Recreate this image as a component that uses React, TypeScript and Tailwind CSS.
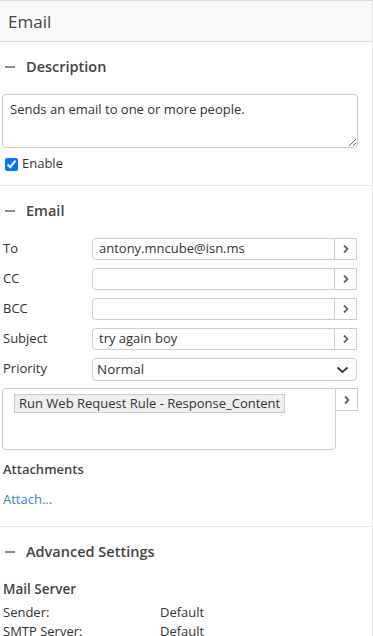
import React from 'react';

const font = { fontFamily: '"Open Sans", "Noto Sans", sans-serif' };

function Chevron() {
  return (
    <svg width="8" height="10" viewBox="0 0 8 10" className="text-[#666]">
      <path d="M2 1.5 L5.5 5 L2 8.5" fill="none" stroke="currentColor" strokeWidth="1.8" />
    </svg>
  );
}

function SectionTitle({ title }: { title: string }) {
  return (
    <div className="flex h-[52px] items-center pb-[2px] pl-[5px]">
      <span className="block h-[2px] w-[10px] bg-[#888]" />
      <span className="ml-[11px] text-[14.5px] font-semibold text-[#444]">{title}</span>
    </div>
  );
}

// one label + input + picker button row
function FieldRow({ label, value }: { label: string; value?: string }) {
  return (
    <div className="flex h-[30px] items-start">
      <div className="w-[90px] pl-[1px] pt-[1px] text-[13px] text-[#333]">{label}</div>
      <div className="flex h-[22px] w-[265px]">
        <div className="flex flex-1 items-center rounded-l-[4px] border border-[#ccc] px-[6px] text-[13px] text-[#333]">
          {value}
        </div>
        <button className="flex w-[22px] items-center justify-center border border-l-0 border-[#ccc] bg-white">
          <Chevron />
        </button>
      </div>
    </div>
  );
}

export default function App() {
  return (
    <div className="min-h-[636px] w-[373px] border-r border-[#e3e3e3] bg-white" style={font}>
      <div className="flex h-[42px] items-center border-y border-[#ddd] bg-[#f9f9f9] pl-[8px] pt-[2px]">
        <span className="text-[17px] text-[#444]">Email</span>
      </div>

      <SectionTitle title="Description" />
      <div className="px-[2px]">
        <textarea
          readOnly
          defaultValue="Sends an email to one or more people."
          className="block h-[54px] w-[356px] resize rounded-[4px] border border-[#ccc] px-[7px] py-[5px] text-[13px] text-[#333] outline-none"
        />
        <label className="mt-[8px] flex h-[16px] items-center pl-[3px] text-[13px] text-[#333]">
          <input type="checkbox" checked readOnly className="m-0 h-[13px] w-[13px] accent-[#0075ff]" />
          <span className="ml-[4px]">Enable</span>
        </label>
      </div>
      <div className="mt-[13px] border-t border-[#e3e3e3]" />

      <SectionTitle title="Email" />
      <div className="px-[2px]">
        <FieldRow label="To" value="antony.mncube@isn.ms" />
        <FieldRow label="CC" />
        <FieldRow label="BCC" />
        <FieldRow label="Subject" value="try again boy" />
        <div className="flex h-[30px] items-start">
          <div className="w-[90px] pl-[1px] pt-[1px] text-[13px] text-[#333]">Priority</div>
          <div className="flex h-[23px] w-[265px] items-center justify-between rounded-[4px] border border-[#ccc] pl-[4px] pr-[7px] text-[13.5px] text-[#333]">
            <span>Normal</span>
            <svg width="13" height="8" viewBox="0 0 13 8">
              <path d="M1.5 1.5 L6.5 6 L11.5 1.5" fill="none" stroke="#333" strokeWidth="1.7" />
            </svg>
          </div>
        </div>
        <div className="flex">
          <div className="h-[62px] w-[334px] rounded-l-[4px] rounded-br-[4px] border border-[#ccc] pl-[11px] pt-[1px]">
            <span className="inline-block h-[19px] border border-[#ccc] bg-[#eee] px-[4px] text-[13px] leading-[17px] text-[#333]">
              Run Web Request Rule - Response_Content
            </span>
          </div>
          <button className="flex h-[23px] w-[22px] items-center justify-center border border-l-0 border-[#ccc] bg-white">
            <Chevron />
          </button>
        </div>

        <div className="mt-[10px] flex h-[20px] items-center pl-[1px] text-[13px] font-semibold text-[#444]">Attachments</div>
        <div className="mt-[10px] flex h-[20px] items-center pl-[1px] text-[13px] text-[#3b7fd1]">Attach...</div>
      </div>
      <div className="mt-[16px] border-t border-[#e3e3e3]" />

      <SectionTitle title="Advanced Settings" />
      <div className="px-[2px]">
        <div className="flex h-[20px] items-center pl-[1px] text-[13.5px] font-semibold text-[#444]">Mail Server</div>
        <div className="mt-[4px] flex h-[19px] items-center pl-[1px] text-[13px] text-[#333]">
          <span className="w-[157px]">Sender:</span>
          <span>Default</span>
        </div>
        <div className="flex h-[19px] items-center pl-[1px] text-[13px] text-[#333]">
          <span className="w-[157px]">SMTP Server:</span>
          <span>Default</span>
        </div>
      </div>
    </div>
  );
}
